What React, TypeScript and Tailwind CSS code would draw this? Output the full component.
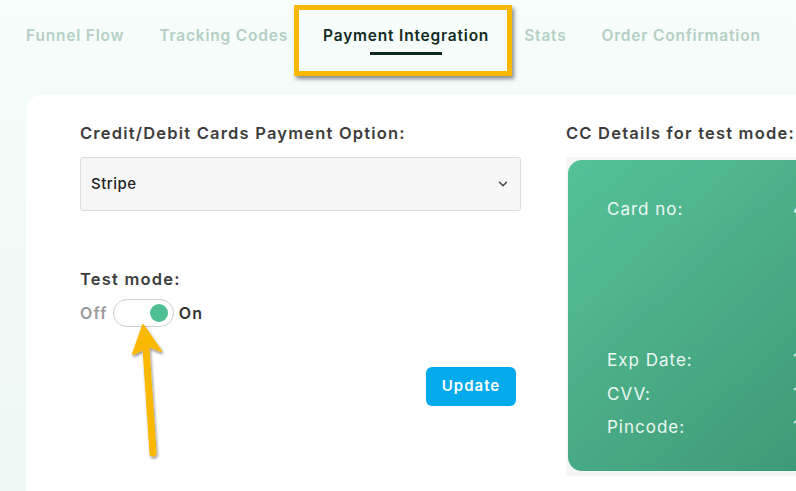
import React from "react";

const tabs = ["Funnel Flow", "Tracking Codes", "Payment Integration", "Stats", "Order Confirmation", "Settings"];

function Arrow() {
  return (
    <svg className="absolute left-[120px] top-[318px] h-[150px] w-[60px]" viewBox="0 0 60 150">
      <defs>
        <filter id="sh" x="-50%" y="-50%" width="200%" height="200%">
          <feDropShadow dx="1" dy="2" stdDeviation="1.5" floodColor="#000" floodOpacity="0.45" />
        </filter>
      </defs>
      <g filter="url(#sh)">
        <line x1="33" y1="135" x2="26" y2="30" stroke="#fbb800" strokeWidth="7" strokeLinecap="round" />
        <path d="M23 7 L41 33 L29 28 L13 36 Z" fill="#fbb800" strokeLinejoin="round" stroke="#fbb800" strokeWidth="2" />
      </g>
    </svg>
  );
}

export default function App() {
  return (
    <div
      className="relative h-[491px] w-[796px] overflow-hidden bg-gradient-to-b from-[#f6fdfb] to-[#eef8f4]"
      style={{ fontFamily: "Inter, 'Noto Sans', sans-serif" }}
    >
      {/* tabs */}
      <div className="flex h-[95px] items-start gap-[35px] whitespace-nowrap pl-[26px] pt-[24px] text-[15.5px] font-semibold tracking-[0.8px] text-[#b5cfc4]">
        {tabs.map((t) => (
          <div key={t} className="relative flex flex-col items-center">
            <span className={t === "Payment Integration" ? "text-[#112b1f]" : ""}>{t}</span>
            {t === "Payment Integration" && <div className="mt-[5px] h-[3px] w-[72px] bg-[#0d2a1b]" />}
          </div>
        ))}
      </div>

      {/* highlight box */}
      <div className="absolute left-[294px] top-[5px] h-[71px] w-[218px] border-[5px] border-[#fbb800] shadow-[2px_3px_4px_rgba(0,0,0,0.45)]" />

      {/* card */}
      <div className="ml-[26px] flex h-[420px] gap-[45px] rounded-tl-[16px] bg-white pl-[54px] pt-[26px] tracking-[1.2px]">
        <div className="flex w-[441px] shrink-0 flex-col">
          <div className="text-[16.5px] font-semibold text-[#3d3d3d]">Credit/Debit Cards Payment Option:</div>
          <div className="mt-[11px] flex h-[54px] items-center justify-between rounded-[3px] border border-[#dcdcdc] bg-[#f7f7f7] pl-[10px] pr-[10px] text-[15px] font-medium tracking-[0.5px] text-[#222]">
            <span>Stripe</span>
            <svg className="h-[14px] w-[14px]" viewBox="0 0 24 24" fill="none" stroke="#444" strokeWidth="2.5" strokeLinecap="round" strokeLinejoin="round">
              <path d="M6 9l6 6 6-6" />
            </svg>
          </div>
          <div className="mt-[56px] text-[16.5px] font-semibold text-[#3d3d3d]">Test mode:</div>
          <div className="mt-[7px] flex items-center gap-[5px] text-[16px] font-semibold">
            <span className="text-[#9a9a9a]">Off</span>
            <div className="flex h-[28px] w-[61px] items-center justify-end rounded-full border border-[#cfcfcf] bg-white pr-[5px]">
              <div className="h-[18px] w-[18px] rounded-full bg-[#4dbf92]" />
            </div>
            <span className="text-[#333]">On</span>
          </div>
          <div className="mt-[40px] flex justify-end pr-[5px]">
            <button className="h-[39px] w-[90px] rounded-[6px] bg-[#03aaec] text-[15px] font-semibold tracking-[1px] text-white">Update</button>
          </div>
        </div>

        <div className="flex flex-col">
          <div className="whitespace-nowrap text-[16.5px] font-semibold text-[#3d3d3d]">CC Details for test mode:</div>
          <div className="mt-[11px] w-[340px] bg-[#f5f5f5] pl-[2px] pt-[3px] pb-[5px]">
            <div className="flex h-[311px] flex-col rounded-[14px] bg-gradient-to-br from-[#56c298] to-[#3a9370] pl-[39px] pt-[37px] text-[17px] tracking-[1px] text-white/90">
              <div className="flex">
                <span className="w-[186px] shrink-0">Card no:</span>
                <span>4</span>
              </div>
              <div className="mt-auto mb-[30px] flex flex-col gap-[8px]">
                <div className="flex"><span className="w-[186px] shrink-0">Exp Date:</span><span>1</span></div>
                <div className="flex"><span className="w-[186px] shrink-0">CVV:</span><span>1</span></div>
                <div className="flex"><span className="w-[186px] shrink-0">Pincode:</span><span>1</span></div>
              </div>
            </div>
          </div>
        </div>
      </div>

      <Arrow />
    </div>
  );
}
